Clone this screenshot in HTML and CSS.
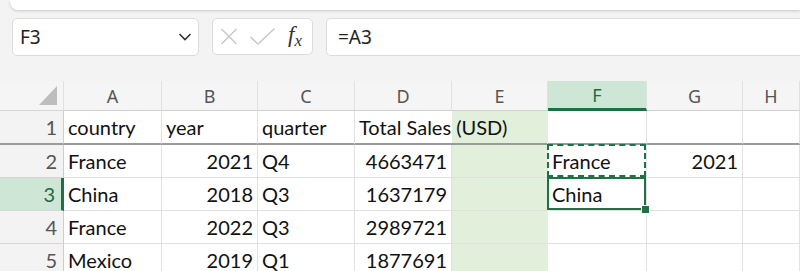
FILE: index.html
```html
<!DOCTYPE html>
<html lang="en">
<head>
    <meta charset="UTF-8">
    <title>Sheet</title>
    <link rel="stylesheet" href="styles.css">
</head>
<body>
    <div class="ribbon"></div>

    <div class="formula-bar">
        <div class="name-box">
            <span>F3</span>
            <svg width="14" height="10" viewBox="0 0 14 10"><polyline points="1.5,2 7,7.5 12.5,2" fill="none" stroke="#333" stroke-width="1.6"/></svg>
        </div>
        <div class="fx-buttons">
            <svg width="18" height="19" viewBox="0 0 18 19"><path d="M1.5 2 L16.5 17 M16.5 2 L1.5 17" stroke="#c8c8c8" stroke-width="1.5"/></svg>
            <svg width="27" height="19" viewBox="0 0 27 19"><polyline points="1.5,10 9,17 25.5,1.5" fill="none" stroke="#c8c8c8" stroke-width="1.5"/></svg>
            <span class="fx">f<sub>x</sub></span>
        </div>
        <div class="formula-input">=A3</div>
    </div>

    <div class="sheet">
        <div class="hdr corner"><span class="tri"></span></div>
        <div class="hdr col">A</div>
        <div class="hdr col">B</div>
        <div class="hdr col">C</div>
        <div class="hdr col">D</div>
        <div class="hdr col">E</div>
        <div class="hdr col active-col">F</div>
        <div class="hdr col">G</div>
        <div class="hdr col">H</div>

        <div class="hdr row frozen">1</div>
        <div class="cell frozen">country</div>
        <div class="cell frozen">year</div>
        <div class="cell frozen">quarter</div>
        <div class="cell frozen overflow">Total Sales (USD)</div>
        <div class="cell frozen fill"></div>
        <div class="cell frozen"></div>
        <div class="cell frozen"></div>
        <div class="cell frozen"></div>

        <div class="hdr row">2</div>
        <div class="cell">France</div>
        <div class="cell num">2021</div>
        <div class="cell">Q4</div>
        <div class="cell num">4663471</div>
        <div class="cell fill"></div>
        <div class="cell copied">France</div>
        <div class="cell num">2021</div>
        <div class="cell"></div>

        <div class="hdr row active-row">3</div>
        <div class="cell">China</div>
        <div class="cell num">2018</div>
        <div class="cell">Q3</div>
        <div class="cell num">1637179</div>
        <div class="cell fill"></div>
        <div class="cell selected">China<span class="handle"></span></div>
        <div class="cell"></div>
        <div class="cell"></div>

        <div class="hdr row">4</div>
        <div class="cell">France</div>
        <div class="cell num">2022</div>
        <div class="cell">Q3</div>
        <div class="cell num">2989721</div>
        <div class="cell fill"></div>
        <div class="cell"></div>
        <div class="cell"></div>
        <div class="cell"></div>

        <div class="hdr row">5</div>
        <div class="cell">Mexico</div>
        <div class="cell num">2019</div>
        <div class="cell">Q1</div>
        <div class="cell num">1877691</div>
        <div class="cell fill"></div>
        <div class="cell"></div>
        <div class="cell"></div>
        <div class="cell"></div>
    </div>
</body>
</html>
```

FILE: styles.css
```css
body {
    margin: 0;
    background-color: #f3f3f3;
    font-family: "Noto Sans", sans-serif;
    overflow: hidden;
}
.ribbon {
    height: 10px;
    margin-left: 10px;
    background: #fff;
    border-radius: 0 0 0 8px;
    box-shadow: 0 1px 3px rgba(0,0,0,0.18);
}
.formula-bar {
    display: flex;
    gap: 13px;
    padding: 8px 0 0 12px;
    height: 38px;
}
.name-box, .fx-buttons, .formula-input {
    box-sizing: border-box;
    height: 38px;
    background: #fff;
    border: 1px solid #dcdcdc;
    border-radius: 5px;
    display: flex;
    align-items: center;
}
.name-box {
    width: 187px;
    padding: 0 6px 0 7px;
    justify-content: space-between;
    font-size: 19px;
    color: #222;
}
.fx-buttons {
    width: 101px;
    height: 37px;
    padding: 0 6px 0 7px;
    gap: 11px;
}
.fx {
    font-family: "Liberation Serif", serif;
    font-style: italic;
    font-size: 23px;
    color: #333;
    margin-left: 1px;
}
.fx sub {
    font-size: 17px;
    vertical-align: -4px;
}
.formula-input {
    flex: 1;
    border-right: none;
    border-radius: 5px 0 0 5px;
    padding-left: 11px;
    font-size: 19px;
    color: #222;
}
.sheet {
    margin-top: 25px;
    display: grid;
    grid-template-columns: 64px 98px 96px 97px 97px 96px 99px 96px 1fr;
    grid-template-rows: 30px 34px repeat(4, 33px);
    background: #fff;
}
.hdr {
    box-sizing: border-box;
    background: #f5f5f5;
    color: #555;
    font-size: 18px;
    border-right: 1px solid #e1e1e1;
    border-bottom: 1px solid #d6d6d6;
    display: flex;
    align-items: center;
}
.col {
    justify-content: center;
    border-bottom: 1px solid #cfcfcf;
}
.row {
    justify-content: flex-end;
    padding-right: 6px;
    font-family: "Lato", sans-serif;
    font-size: 20px;
    color: #555;
    background: #f3f3f3;
    border-right: 1px solid #cdcdcd;
}
.corner {
    justify-content: flex-end;
    align-items: flex-end;
    padding: 0 6px 5px 0;
}
.tri {
    width: 0;
    height: 0;
    border-left: 18px solid transparent;
    border-bottom: 19px solid #bdbdbd;
}
.active-col {
    background: #cde6d5;
    color: #1e6b3e;
    border-bottom: 3px solid #1e7145;
}
.active-row {
    background: #cde6d5;
    color: #1e6b3e;
    border-right: 3px solid #1e7145;
}
.cell {
    box-sizing: border-box;
    font-family: "Lato", sans-serif;
    font-size: 20px;
    color: #111;
    padding: 0 4px;
    border-right: 1px solid #e1e1e1;
    border-bottom: 1px solid #e1e1e1;
    display: flex;
    align-items: center;
    white-space: nowrap;
    position: relative;
}
.num {
    justify-content: flex-end;
}
.frozen {
    border-bottom: 2px solid #9a9a9a;
}
.overflow {
    overflow: visible;
    z-index: 1;
    border-right: none;
}
.fill {
    background: #e2efda;
    border-right-color: #e2efda;
}
.copied::after, .selected::after {
    content: "";
    position: absolute;
    top: -1px;
    left: -1px;
    right: 0;
    bottom: 0;
    border: 2px dashed #1e7145;
}
.selected::after {
    border-style: solid;
}
.handle {
    position: absolute;
    right: -4px;
    bottom: -4px;
    width: 7px;
    height: 7px;
    background: #1e7145;
    border: 1px solid #fff;
    z-index: 2;
}
```
